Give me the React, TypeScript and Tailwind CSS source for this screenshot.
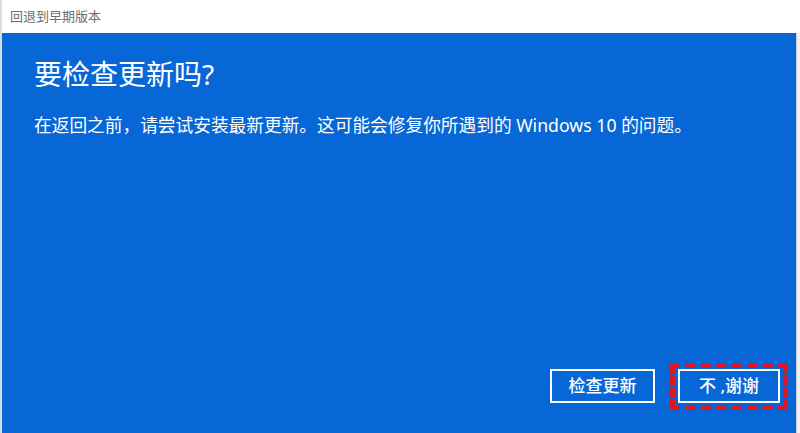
const font = {
	fontFamily: '"Segoe UI", "Noto Sans", "Noto Sans CJK SC", sans-serif',
};

const App = () => {
	return (
		<div
			className="w-[800px] h-[433px] bg-white flex flex-col overflow-hidden"
			style={font}
		>
			<div className="h-[33px] flex items-center pl-[8px] border-l-2 border-[#dcdcdc]">
				<span className="text-[13px] text-[#6e6e6e]">回退到早期版本</span>
			</div>
			<div className="flex-1 flex">
				<div className="w-[2px] bg-[#d6dbe2]" />
				<div className="flex-1 bg-[#0867d6] flex flex-col pl-[32px] pr-[16px] pt-[22px] pb-[30px] text-white">
					<h1 className="text-[28px] leading-[38px] font-normal">
						要检查更新吗?
					</h1>
					<p className="mt-[20px] text-[17.7px] leading-[24px]">
						在返回之前，请尝试安装最新更新。这可能会修复你所遇到的 Windows 10 的问题。
					</p>
					<div className="mt-auto flex justify-end gap-[23px]">
						<button className="w-[105px] h-[34px] border-2 border-white text-[17px] text-white font-medium">
							检查更新
						</button>
						<div className="relative">
							<div className="absolute -left-[8px] -right-[8px] -top-[6px] -bottom-[7px] border-[5px] border-dashed border-[#e3141e]" />
							<button className="relative w-[102px] h-[34px] border-2 border-white text-[17px] text-white font-medium">
								不 ,谢谢
							</button>
						</div>
					</div>
				</div>
				<div className="w-[4px] bg-[#eef0f3] border-l border-[#c8ccd2]" />
			</div>
		</div>
	);
};

export default App;
